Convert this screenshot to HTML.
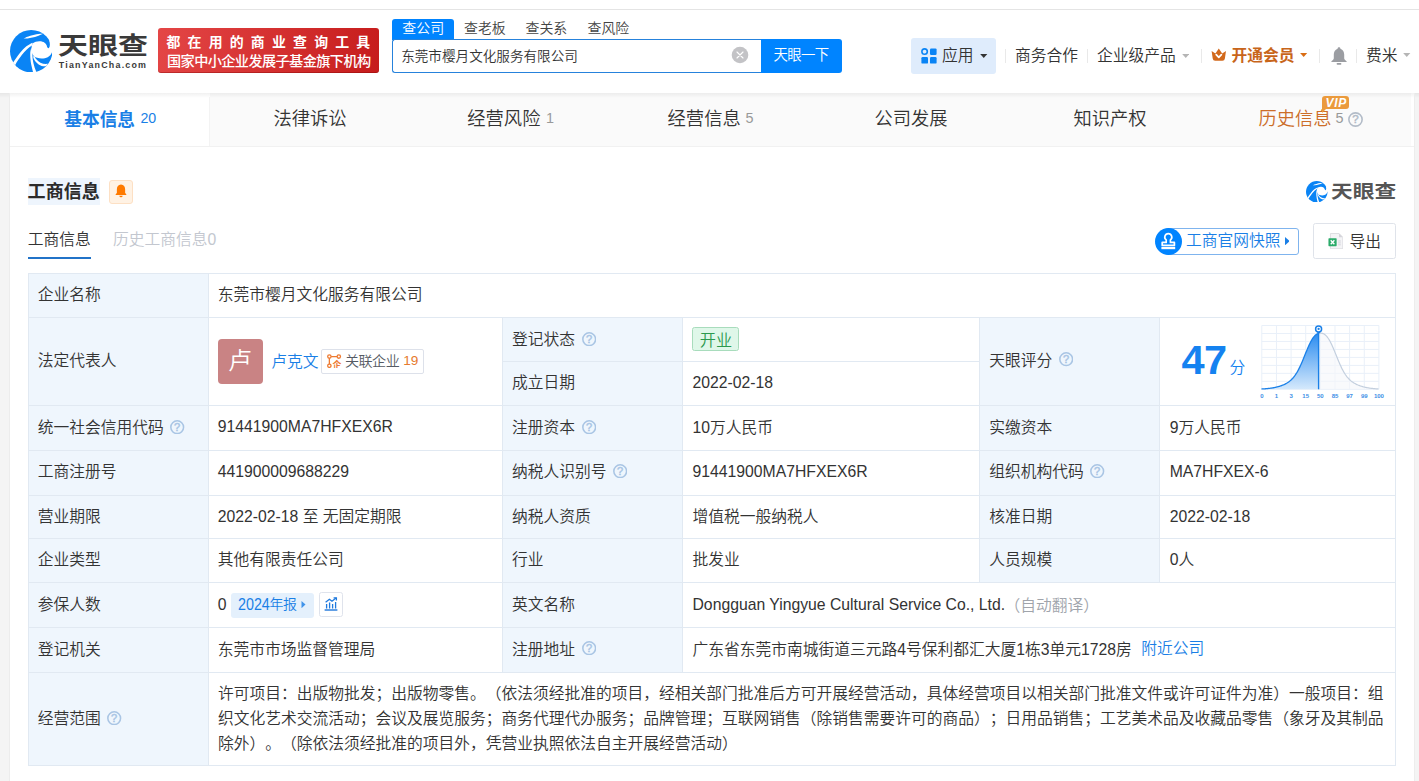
<!DOCTYPE html>
<html lang="zh-CN"><head><meta charset="utf-8"><title>东莞市樱月文化服务有限公司 - 天眼查</title>
<style>
*{box-sizing:border-box;margin:0;padding:0}
html,body{width:1419px;height:781px;overflow:hidden}
body{position:relative;background:#f4f4f4;font-family:"Liberation Sans","Noto Sans CJK SC",sans-serif;color:#333;font-size:16px;font-weight:350;text-spacing-trim:space-all}
.abs{position:absolute}
.t{position:absolute;white-space:nowrap;line-height:1}
#hdr{left:0;top:0;width:1419px;height:93px;background:#fff}
#hshadow{left:0;top:93px;width:1419px;height:5px;background:linear-gradient(rgba(0,0,0,.055),rgba(0,0,0,0))}
#topline{left:0;top:9px;width:1419px;height:1px;background:#e4e4e4}
#banner{left:158px;top:28px;width:221px;height:45px;border-radius:3px;background:linear-gradient(100deg,#e44646,#c61c1c);box-shadow:inset 0 -1px 0 rgba(120,0,0,.35)}
#stab{left:392px;top:19px;width:62px;height:21px;background:#0084ff;border-radius:3px 3px 0 0}
#sbox{left:392px;top:39px;width:370px;height:34px;border:1.2px solid #2682dc;border-right:none;border-radius:3px 0 0 3px;background:#fff}
#sbtn{left:761px;top:39px;width:81px;height:34px;background:#0084ff;border-radius:0 3px 3px 0}
#appbtn{left:911px;top:38px;width:85px;height:36px;background:#dfecfc;border-radius:3px}
.sep{position:absolute;top:49px;width:1px;height:14px;background:#e9e9e9}
#tabbar{left:10px;top:93px;width:1400.8px;height:53px;background:#fafafa}
#tab1{left:10px;top:93px;width:200px;height:53px;background:#fff}
#panel{left:10px;top:93px;width:1404px;height:700px;background:#fff}
.help{position:absolute;width:14px;height:14px}
</style></head>
<body>
<div class="abs" id="hdr"></div><div class="abs" id="topline"></div>
<svg class="abs" style="left:9.8px;top:29.6px;width:42.4px;height:42.4px" viewBox="0 0 100 100">
<circle cx="50" cy="50" r="50" fill="#0a84f5"/>
<g fill="#fff">
<path d="M32 20.2 C40 15.2 55 10.4 67.3 9.2 C71 8.8 75 8.7 78.4 8.8 C74 10.4 70.5 12 67.3 13.4 C56.3 17.4 41 20.6 32 20.2Z"/>
<path d="M53.6 30 C45 33 32.5 42 24.3 53.3 C17.3 62.4 11.5 71 7 77.4 L12.4 82.6 C15.8 75 21.8 67 28.3 58.3 C35.6 49 43.5 41.6 51.8 36.5Z"/>
<path d="M53.1 31.6 C58 28.3 64 26.6 70 26.8 C79 27 86 31.5 87.6 40 C89 42.6 90.6 43.2 91.9 42.7 C94.6 38.5 94.8 31.5 92.3 25 L104 22 L104 50.5 L99.7 50 C98.5 56 94 61.5 89 64 C82 67.8 72 68.3 64.2 65.6 C61 64.6 58.5 63.6 57 62.4 C53 57.5 50.9 52.5 50.7 47.6 C50.4 42 51 36.5 53.1 31.6Z"/>
<path d="M50.6 42 C46.8 50 47 62 49.8 80 C51.2 87 52.9 94 54.6 100.4 L62 98.6 C59.2 92 57 85.5 55.5 79 C53.6 71 52.6 62 53 55Z"/>
<path d="M54 62 C56 69.5 61 77.2 67.6 81.3 C73.2 84.9 79.3 86.2 85 85.4 L89.4 79.8 C83.2 80.6 77.2 79.8 71.8 77.1 C66 74.1 61 69 57.8 62.6Z"/>
</g></svg>
<div class="t " style="left:58px;top:32.0px;height:28.4px;line-height:28.4px;font-size:24.4px;color:#3a3a3a;font-weight:700;transform-origin:0 50%;transform:scaleX(1.23);">天眼查</div>
<div class="t " style="left:58.8px;top:58.8px;height:12.9px;line-height:12.9px;font-size:8.9px;color:#3a3a3a;font-weight:700;letter-spacing:1.22px;">TianYanCha.com</div>
<div class="abs" id="banner"></div>
<div class="t " style="left:166.5px;top:33.5px;height:17.9px;line-height:17.9px;font-size:13.9px;color:#fff;font-weight:700;letter-spacing:7.2px;">都在用的商业查询工具</div>
<div class="t " style="left:167px;top:52.1px;height:18.2px;line-height:18.2px;font-size:14.2px;color:#fff;font-weight:500;letter-spacing:-0.62px;">国家中小企业发展子基金旗下机构</div>
<div class="abs" id="stab"></div><div class="abs" id="sbox"></div><div class="abs" id="sbtn"></div>
<div class="t " style="left:402.3px;top:19.9px;height:17.95px;line-height:17.95px;font-size:13.95px;color:#fff;font-weight:350;">查公司</div>
<div class="t " style="left:464px;top:19.9px;height:17.95px;line-height:17.95px;font-size:13.95px;color:#444;font-weight:350;">查老板</div>
<div class="t " style="left:525.5px;top:19.9px;height:17.95px;line-height:17.95px;font-size:13.95px;color:#444;font-weight:350;">查关系</div>
<div class="t " style="left:587.5px;top:19.9px;height:17.95px;line-height:17.95px;font-size:13.95px;color:#444;font-weight:350;">查风险</div>
<div class="t " style="left:401.2px;top:47.9px;height:18px;line-height:18px;font-size:13.6px;color:#333;font-weight:350;">东莞市樱月文化服务有限公司</div>
<svg class="abs" style="left:731px;top:46px;width:18px;height:18px" viewBox="0 0 18 18"><circle cx="9" cy="9" r="8.3" fill="#c3c3c6"/><path d="M6 6L12 12M12 6L6 12" stroke="#fff" stroke-width="1.15" stroke-linecap="round"/></svg>
<div class="t " style="left:773.5px;top:46.4px;height:18.4px;line-height:18.4px;font-size:14.4px;color:#fff;font-weight:350;letter-spacing:-0.6px;">天眼一下</div>
<div class="abs" id="appbtn"></div>
<svg class="abs" style="left:921px;top:48px;width:16px;height:16px" viewBox="0 0 16 16"><circle cx="3.6" cy="3.6" r="2.7" fill="none" stroke="#0a84f5" stroke-width="1.6"/><rect x="9" y="0.4" width="6.6" height="6.6" rx="1.2" fill="#0a84f5"/><rect x="0.4" y="9" width="6.6" height="6.6" rx="1.2" fill="#0a84f5"/><rect x="9" y="9" width="6.6" height="6.6" rx="1.2" fill="#0a84f5"/></svg>
<div class="t " style="left:942px;top:46.0px;height:20px;line-height:20px;font-size:15.75px;color:#333;font-weight:350;">应用</div>
<svg class="abs" style="left:980px;top:53.5px;width:7.5px;height:4px" viewBox="0 0 8 4.5"><path d="M0 0H8L4 4.5Z" fill="#333"/></svg>
<div class="sep" style="left:1005px"></div>
<div class="sep" style="left:1087px"></div>
<div class="sep" style="left:1201px"></div>
<div class="sep" style="left:1319px"></div>
<div class="sep" style="left:1356px"></div>
<div class="t " style="left:1015px;top:46.0px;height:20px;line-height:20px;font-size:15.75px;color:#333;font-weight:350;">商务合作</div>
<div class="t " style="left:1097px;top:46.0px;height:20px;line-height:20px;font-size:15.75px;color:#333;font-weight:350;">企业级产品</div>
<svg class="abs" style="left:1181.5px;top:53.5px;width:7.5px;height:4px" viewBox="0 0 8 4.5"><path d="M0 0H8L4 4.5Z" fill="#b5b5b5"/></svg>
<svg class="abs" style="left:1211px;top:48.4px;width:15.6px;height:13px" viewBox="0 0 15.6 13"><path d="M0.6 3L4.4 5.6L7.8 0.4L11.2 5.6L15 3L13.9 10.6Q13.6 12.8 11.4 12.8H4.2Q2 12.8 1.7 10.6Z" fill="#d2691c"/><path d="M5.2 6.6L7.8 9.4L10.4 6.6" fill="none" stroke="#fff" stroke-width="1.7" stroke-linecap="round" stroke-linejoin="round"/></svg>
<div class="t " style="left:1231.5px;top:45.8px;height:20px;line-height:20px;font-size:15.75px;color:#c8651a;font-weight:700;">开通会员</div>
<svg class="abs" style="left:1300.3px;top:53.2px;width:7.3px;height:4px" viewBox="0 0 8 4.5"><path d="M0 0H8L4 4.5Z" fill="#d96d14"/></svg>
<svg class="abs" style="left:1330.5px;top:46.8px;width:16px;height:18px" viewBox="0 0 16 18"><path d="M8 0.3C8.9 0.3 9.4 0.9 9.4 1.7C12 2.5 13.2 4.9 13.2 7.6V11.2C13.2 12.4 14.2 13.2 15.6 14.2V15H0.4V14.2C1.8 13.2 2.8 12.4 2.8 11.2V7.6C2.8 4.9 4 2.5 6.6 1.7C6.6 0.9 7.1 0.3 8 0.3Z" fill="#9b9da2"/><rect x="5.6" y="16" width="4.8" height="1.7" rx="0.85" fill="#9b9da2"/></svg>
<div class="t " style="left:1366px;top:45.8px;height:20px;line-height:20px;font-size:15.75px;color:#333;font-weight:350;">费米</div>
<svg class="abs" style="left:1403px;top:53.2px;width:7.5px;height:4px" viewBox="0 0 8 4.5"><path d="M0 0H8L4 4.5Z" fill="#b5b5b5"/></svg>
<div class="abs" id="panel"></div><div class="abs" id="tabbar"></div><div class="abs" id="tab1"></div><div class="abs" id="hshadow"></div><div class="abs" style="left:10px;top:146px;width:1404px;height:1px;background:#f1f1f1"></div><div class="abs" style="left:209px;top:97px;width:1px;height:49px;background:#f3f3f3"></div><div class="abs" style="left:9px;top:93px;width:1px;height:700px;background:#ececec"></div><div class="abs" style="left:1414px;top:93px;width:1px;height:700px;background:#ededed"></div>
<div class="t " style="left:64.3px;top:108.8px;height:22px;line-height:22px;font-size:17.7px;color:#1a7fe6;font-weight:700;">基本信息</div>
<div class="t " style="left:140.4px;top:108.9px;height:18.2px;line-height:18.2px;font-size:14.2px;color:#1a7fe6;font-weight:350;">20</div>
<div class="t " style="left:273.5px;top:108.4px;height:22.3px;line-height:22.3px;font-size:18.3px;color:#333;font-weight:350;">法律诉讼</div>
<div class="t " style="left:467.3px;top:108.4px;height:22.3px;line-height:22.3px;font-size:18.3px;color:#333;font-weight:350;">经营风险</div>
<div class="t " style="left:546px;top:109.0px;height:18.4px;line-height:18.4px;font-size:14.4px;color:#999;font-weight:350;">1</div>
<div class="t " style="left:667.6px;top:108.4px;height:22.3px;line-height:22.3px;font-size:18.3px;color:#333;font-weight:350;">经营信息</div>
<div class="t " style="left:745.6px;top:109.0px;height:18.4px;line-height:18.4px;font-size:14.4px;color:#999;font-weight:350;">5</div>
<div class="t " style="left:874.5px;top:108.4px;height:22.3px;line-height:22.3px;font-size:18.3px;color:#333;font-weight:350;">公司发展</div>
<div class="t " style="left:1073.5px;top:108.4px;height:22.3px;line-height:22.3px;font-size:18.3px;color:#333;font-weight:350;">知识产权</div>
<div class="t " style="left:1258.5px;top:108.4px;height:22.3px;line-height:22.3px;font-size:18.3px;color:#cc6d28;font-weight:350;">历史信息</div>
<div class="t " style="left:1335.6px;top:109.0px;height:18.4px;line-height:18.4px;font-size:14.4px;color:#999;font-weight:350;">5</div>
<svg class="help" style="left:1348px;top:111.5px;width:15px;height:15px" viewBox="0 0 14 14"><circle cx="7" cy="7" r="6.2" fill="none" stroke="#b3bcc8" stroke-width="1.5"/><text x="7" y="10.7" text-anchor="middle" font-family="Liberation Sans, sans-serif" font-size="10.8" fill="#b3bcc8" stroke="#b3bcc8" stroke-width="0.45">?</text></svg>
<svg class="abs" style="left:1322px;top:96px;width:27px;height:17px" viewBox="0 0 27 17"><path d="M3 0H24Q27 0 27 3V10Q27 13 24 13H4L0 17V3Q0 0 3 0Z" fill="#eb9a3c"/><text x="14.2" y="10.8" text-anchor="middle" font-family="Liberation Sans, sans-serif" font-size="12" font-weight="700" font-style="italic" letter-spacing="0.6" fill="#fff">VIP</text></svg>
<div class="abs" style="left:28px;top:178px;width:72px;height:27px;background:#eef5fd"></div>
<div class="t " style="left:27.6px;top:180.9px;height:22.05px;line-height:22.05px;font-size:18.05px;color:#2b2b2b;font-weight:700;">工商信息</div>
<div class="abs" style="left:109px;top:180px;width:24px;height:24px;background:#fff2e4;border:1px solid #fde0c4;border-radius:3px"></div>
<svg class="abs" style="left:113.7px;top:183.8px;width:14px;height:15px" viewBox="0 0 14 16"><path d="M7 0.5C4 0.5 2.6 2.8 2.6 5.6V9.2L1 11.8H13L11.4 9.2V5.6C11.4 2.8 10 0.5 7 0.5Z" fill="#ff7a00"/><path d="M5.2 12.6H8.8Q8.6 14.2 7 14.2Q5.4 14.2 5.2 12.6Z" fill="#ff7a00"/></svg>
<div class="t " style="left:27.8px;top:229.6px;height:20.0px;line-height:20.0px;font-size:15.75px;color:#333;font-weight:350;">工商信息</div>
<div class="abs" style="left:27.8px;top:256.8px;width:63.2px;height:2.5px;background:#2173c8"></div>
<div class="t " style="left:113px;top:229.5px;height:20px;line-height:20px;font-size:15.75px;color:#c3c7cf;font-weight:350;">历史工商信息0</div>
<svg class="abs" style="left:1306px;top:180.5px;width:21.5px;height:21.5px" viewBox="0 0 100 100">
<circle cx="50" cy="50" r="50" fill="#0a84f5"/>
<g fill="#fff">
<path d="M32 20.2 C40 15.2 55 10.4 67.3 9.2 C71 8.8 75 8.7 78.4 8.8 C74 10.4 70.5 12 67.3 13.4 C56.3 17.4 41 20.6 32 20.2Z"/>
<path d="M53.6 30 C45 33 32.5 42 24.3 53.3 C17.3 62.4 11.5 71 7 77.4 L12.4 82.6 C15.8 75 21.8 67 28.3 58.3 C35.6 49 43.5 41.6 51.8 36.5Z"/>
<path d="M53.1 31.6 C58 28.3 64 26.6 70 26.8 C79 27 86 31.5 87.6 40 C89 42.6 90.6 43.2 91.9 42.7 C94.6 38.5 94.8 31.5 92.3 25 L104 22 L104 50.5 L99.7 50 C98.5 56 94 61.5 89 64 C82 67.8 72 68.3 64.2 65.6 C61 64.6 58.5 63.6 57 62.4 C53 57.5 50.9 52.5 50.7 47.6 C50.4 42 51 36.5 53.1 31.6Z"/>
<path d="M50.6 42 C46.8 50 47 62 49.8 80 C51.2 87 52.9 94 54.6 100.4 L62 98.6 C59.2 92 57 85.5 55.5 79 C53.6 71 52.6 62 53 55Z"/>
<path d="M54 62 C56 69.5 61 77.2 67.6 81.3 C73.2 84.9 79.3 86.2 85 85.4 L89.4 79.8 C83.2 80.6 77.2 79.8 71.8 77.1 C66 74.1 61 69 57.8 62.6Z"/>
</g></svg>
<div class="t " style="left:1331.3px;top:181.1px;height:22.4px;line-height:22.4px;font-size:18.4px;color:#555;font-weight:700;transform-origin:0 50%;transform:scaleX(1.18);">天眼查</div>
<div class="abs" style="left:1165px;top:228px;width:134px;height:27px;border:1px solid #7fb4ee;border-radius:3px;background:#fff"></div>
<svg class="abs" style="left:1154.5px;top:228px;width:27px;height:27px" viewBox="0 0 27 27"><circle cx="13.5" cy="13.5" r="13.5" fill="#0084ff"/><path d="M13.3 5.7a3.5 3.5 0 0 1 2.1 6.3v2.4h4v3H7.2v-3h4v-2.4a3.5 3.5 0 0 1 2.1-6.3Z" fill="none" stroke="#fff" stroke-width="1.7" stroke-linejoin="round"/><rect x="6.4" y="18.9" width="13.8" height="2.3" fill="#fff"/></svg>
<div class="t " style="left:1186px;top:231.0px;height:20px;line-height:20px;font-size:15.75px;color:#1a7fe6;font-weight:350;">工商官网快照</div>
<svg class="abs" style="left:1284.8px;top:236.7px;width:4.6px;height:8.3px" viewBox="0 0 5 9"><path d="M0 0L5 4.5L0 9Z" fill="#1a7fe6"/></svg>
<div class="abs" style="left:1313px;top:223px;width:83px;height:36px;border:1px solid #dfe3ea;border-radius:2.5px;background:#fff"></div>
<svg class="abs" style="left:1327.6px;top:232.8px;width:15.4px;height:16.2px" viewBox="0 0 16 17"><path d="M2.5 0.5H11.5L15.5 4.5V16.5H2.5Z" fill="#f4f4f6" stroke="#d9d9de" stroke-width="0.9"/><path d="M11.5 0.5V4.5H15.5Z" fill="#d4d4da"/><rect x="0.4" y="5.6" width="8.6" height="8.2" rx="0.6" fill="#2bab6a"/><path d="M2.8 7.6L6.6 11.8M6.6 7.6L2.8 11.8" stroke="#fff" stroke-width="1.4"/><path d="M10.6 8.4H13.4M10.6 10.4H13.4M10.6 12.4H13.4" stroke="#d4d4da" stroke-width="1"/></svg>
<div class="t " style="left:1349.5px;top:231.5px;height:20px;line-height:20px;font-size:15.75px;color:#333;font-weight:350;">导出</div>
<div class="abs" style="left:28px;top:273px;width:180px;height:492px;background:#eff6fd"></div>
<div class="abs" style="left:502px;top:317px;width:180px;height:355px;background:#eff6fd"></div>
<div class="abs" style="left:979px;top:317px;width:180px;height:265px;background:#eff6fd"></div>
<div class="abs" style="left:28px;top:273px;width:1368px;height:1px;background:#e1e9f2"></div>
<div class="abs" style="left:28px;top:317px;width:1368px;height:1px;background:#e1e9f2"></div>
<div class="abs" style="left:502px;top:361px;width:478px;height:1px;background:#e1e9f2"></div>
<div class="abs" style="left:28px;top:405px;width:1368px;height:1px;background:#e1e9f2"></div>
<div class="abs" style="left:28px;top:450px;width:1368px;height:1px;background:#e1e9f2"></div>
<div class="abs" style="left:28px;top:495px;width:1368px;height:1px;background:#e1e9f2"></div>
<div class="abs" style="left:28px;top:538px;width:1368px;height:1px;background:#e1e9f2"></div>
<div class="abs" style="left:28px;top:582px;width:1368px;height:1px;background:#e1e9f2"></div>
<div class="abs" style="left:28px;top:627px;width:1368px;height:1px;background:#e1e9f2"></div>
<div class="abs" style="left:28px;top:672px;width:1368px;height:1px;background:#e1e9f2"></div>
<div class="abs" style="left:28px;top:765px;width:1368px;height:1px;background:#e1e9f2"></div>
<div class="abs" style="left:28px;top:273px;width:1px;height:493px;background:#e1e9f2"></div>
<div class="abs" style="left:1395px;top:273px;width:1px;height:493px;background:#e1e9f2"></div>
<div class="abs" style="left:208px;top:273px;width:1px;height:493px;background:#e1e9f2"></div>
<div class="abs" style="left:502px;top:317px;width:1px;height:356px;background:#e1e9f2"></div>
<div class="abs" style="left:682px;top:317px;width:1px;height:356px;background:#e1e9f2"></div>
<div class="abs" style="left:979px;top:317px;width:1px;height:266px;background:#e1e9f2"></div>
<div class="abs" style="left:1159px;top:317px;width:1px;height:266px;background:#e1e9f2"></div>
<div class="t " style="left:37.7px;top:284.5px;height:20px;line-height:20px;font-size:15.75px;color:#333;font-weight:350;">企业名称</div>
<div class="t " style="left:217.7px;top:284.5px;height:20px;line-height:20px;font-size:15.75px;color:#333;font-weight:350;">东莞市樱月文化服务有限公司</div>
<div class="t " style="left:37.7px;top:350.9px;height:20px;line-height:20px;font-size:15.75px;color:#333;font-weight:350;">法定代表人</div>
<div class="abs" style="left:218px;top:339px;width:45px;height:45px;border-radius:4px;background:#c98384"></div>
<div class="t " style="left:228px;top:347.0px;height:28px;line-height:28px;font-size:24px;color:#fff;font-weight:350;">卢</div>
<div class="t " style="left:271.3px;top:351.6px;height:20px;line-height:20px;font-size:15.75px;color:#1a7fe6;font-weight:350;">卢克文</div>
<div class="abs" style="left:321px;top:349px;width:103px;height:25px;border:1px solid #dde1ea;border-radius:2px;background:#fff"></div>
<svg class="abs" style="left:327.3px;top:354px;width:14.4px;height:14.4px" viewBox="0 0 14 14"><g fill="none" stroke="#ee7a30" stroke-width="1.25"><circle cx="2.3" cy="2.5" r="1.65"/><circle cx="11.5" cy="2.5" r="1.65"/><circle cx="2.3" cy="11.4" r="1.65"/><path d="M4 2.5H9.8M2.3 4.2V9.7"/></g><text x="9.7" y="13.4" text-anchor="middle" font-family="Noto Sans CJK SC, sans-serif" font-size="8.6" font-weight="700" fill="#ee7a30">企</text></svg>
<div class="t " style="left:345px;top:351.6px;height:18.1px;line-height:18.1px;font-size:14.1px;color:#555a63;font-weight:350;letter-spacing:-0.55px;">关联企业</div>
<div class="t " style="left:403.2px;top:352.3px;height:18px;line-height:18px;font-size:13.6px;color:#e67a2e;font-weight:350;">19</div>
<div class="t " style="left:512.0px;top:330.1px;height:20px;line-height:20px;font-size:15.75px;color:#333;font-weight:350;">登记状态</div><svg class="help" style="left:581.6px;top:331.6px;width:14.4px;height:14.4px" viewBox="0 0 14 14"><circle cx="7" cy="7" r="6.2" fill="none" stroke="#a9c5e4" stroke-width="1.5"/><text x="7" y="10.7" text-anchor="middle" font-family="Liberation Sans, sans-serif" font-size="10.8" fill="#a9c5e4" stroke="#a9c5e4" stroke-width="0.45">?</text></svg>
<div class="abs" style="left:692px;top:327px;width:47px;height:24px;border:1px solid #a8dcbc;border-radius:2.5px;background:#dff7e9"></div>
<div class="t " style="left:699.8px;top:329.9px;height:20.15px;line-height:20.15px;font-size:16.15px;color:#2c994e;font-weight:350;">开业</div>
<div class="t " style="left:512.0px;top:372.7px;height:20px;line-height:20px;font-size:15.75px;color:#333;font-weight:350;">成立日期</div>
<div class="t " style="left:692.5px;top:372.7px;height:20px;line-height:20px;font-size:15.75px;color:#333;font-weight:350;">2022-02-18</div>
<div class="t " style="left:989.2px;top:350.9px;height:20px;line-height:20px;font-size:15.75px;color:#333;font-weight:350;">天眼评分</div><svg class="help" style="left:1058.8px;top:352.4px;width:14.4px;height:14.4px" viewBox="0 0 14 14"><circle cx="7" cy="7" r="6.2" fill="none" stroke="#a9c5e4" stroke-width="1.5"/><text x="7" y="10.7" text-anchor="middle" font-family="Liberation Sans, sans-serif" font-size="10.8" fill="#a9c5e4" stroke="#a9c5e4" stroke-width="0.45">?</text></svg>
<div class="t " style="left:1181.6px;top:337.2px;height:45.5px;line-height:45.5px;font-size:41.5px;color:#1582f0;font-weight:700;letter-spacing:-0.6px;">47</div>
<div class="t " style="left:1229.5px;top:357.5px;height:20px;line-height:20px;font-size:15.75px;color:#1582f0;font-weight:350;">分</div>
<svg class="abs" style="left:1250px;top:318px;width:140px;height:86px" viewBox="1250 318 140 86"><defs><linearGradient id="cg" x1="0" y1="0" x2="0" y2="1"><stop offset="0" stop-color="#2b8cf0"/><stop offset="1" stop-color="#d5e9fc"/></linearGradient></defs><path d="M1261.80 325.5V389.3" stroke="#e9f0f9" stroke-width="1"/><path d="M1261.8 325.50H1378.9" stroke="#e9f0f9" stroke-width="1"/><path d="M1276.44 325.5V389.3" stroke="#e9f0f9" stroke-width="1"/><path d="M1261.8 333.48H1378.9" stroke="#e9f0f9" stroke-width="1"/><path d="M1291.08 325.5V389.3" stroke="#e9f0f9" stroke-width="1"/><path d="M1261.8 341.45H1378.9" stroke="#e9f0f9" stroke-width="1"/><path d="M1305.71 325.5V389.3" stroke="#e9f0f9" stroke-width="1"/><path d="M1261.8 349.43H1378.9" stroke="#e9f0f9" stroke-width="1"/><path d="M1320.35 325.5V389.3" stroke="#e9f0f9" stroke-width="1"/><path d="M1261.8 357.40H1378.9" stroke="#e9f0f9" stroke-width="1"/><path d="M1334.99 325.5V389.3" stroke="#e9f0f9" stroke-width="1"/><path d="M1261.8 365.38H1378.9" stroke="#e9f0f9" stroke-width="1"/><path d="M1349.62 325.5V389.3" stroke="#e9f0f9" stroke-width="1"/><path d="M1261.8 373.35H1378.9" stroke="#e9f0f9" stroke-width="1"/><path d="M1364.26 325.5V389.3" stroke="#e9f0f9" stroke-width="1"/><path d="M1261.8 381.32H1378.9" stroke="#e9f0f9" stroke-width="1"/><path d="M1378.90 325.5V389.3" stroke="#e9f0f9" stroke-width="1"/><path d="M1261.8 389.30H1378.9" stroke="#e9f0f9" stroke-width="1"/><path d="M1261.5 388.98 L1262.0 388.96 L1262.5 388.93 L1263.0 388.91 L1263.5 388.88 L1264.0 388.85 L1264.5 388.81 L1265.0 388.78 L1265.5 388.74 L1266.0 388.70 L1266.5 388.66 L1267.0 388.62 L1267.5 388.57 L1268.0 388.52 L1268.5 388.47 L1269.0 388.41 L1269.5 388.35 L1270.0 388.29 L1270.5 388.22 L1271.0 388.15 L1271.5 388.08 L1272.0 388.00 L1272.5 387.92 L1273.0 387.84 L1273.5 387.75 L1274.0 387.66 L1274.5 387.56 L1275.0 387.46 L1275.5 387.35 L1276.0 387.24 L1276.5 387.12 L1277.0 386.99 L1277.5 386.87 L1278.0 386.73 L1278.5 386.59 L1279.0 386.44 L1279.5 386.29 L1280.0 386.13 L1280.5 385.96 L1281.0 385.79 L1281.5 385.61 L1282.0 385.42 L1282.5 385.22 L1283.0 385.02 L1283.5 384.80 L1284.0 384.58 L1284.5 384.34 L1285.0 384.10 L1285.5 383.84 L1286.0 383.57 L1286.5 383.29 L1287.0 382.99 L1287.5 382.68 L1288.0 382.36 L1288.5 382.02 L1289.0 381.65 L1289.5 381.27 L1290.0 380.87 L1290.5 380.45 L1291.0 380.01 L1291.5 379.54 L1292.0 379.04 L1292.5 378.52 L1293.0 377.96 L1293.5 377.38 L1294.0 376.77 L1294.5 376.12 L1295.0 375.44 L1295.5 374.72 L1296.0 373.96 L1296.5 373.17 L1297.0 372.35 L1297.5 371.48 L1298.0 370.58 L1298.5 369.64 L1299.0 368.67 L1299.5 367.66 L1300.0 366.62 L1300.5 365.54 L1301.0 364.43 L1301.5 363.30 L1302.0 362.14 L1302.5 360.96 L1303.0 359.76 L1303.5 358.54 L1304.0 357.31 L1304.5 356.08 L1305.0 354.84 L1305.5 353.60 L1306.0 352.36 L1306.5 351.14 L1307.0 349.93 L1307.5 348.74 L1308.0 347.57 L1308.5 346.43 L1309.0 345.32 L1309.5 344.24 L1310.0 343.21 L1310.5 342.21 L1311.0 341.26 L1311.5 340.36 L1312.0 339.51 L1312.5 338.71 L1313.0 337.97 L1313.5 337.28 L1314.0 336.65 L1314.5 336.07 L1315.0 335.56 L1315.5 335.09 L1316.0 334.69 L1316.5 334.33 L1317.0 334.04 L1317.5 333.79 L1318.0 333.59 L1318.5 333.43 L1318.6 389.3 L1261.8 389.3Z" fill="url(#cg)"/><path d="M1319.0 333.32 L1319.5 333.25 L1320.0 333.21 L1320.5 333.20 L1321.0 333.21 L1321.5 333.25 L1322.0 333.32 L1322.5 333.43 L1323.0 333.59 L1323.5 333.79 L1324.0 334.04 L1324.5 334.33 L1325.0 334.69 L1325.5 335.09 L1326.0 335.56 L1326.5 336.07 L1327.0 336.65 L1327.5 337.28 L1328.0 337.97 L1328.5 338.71 L1329.0 339.51 L1329.5 340.36 L1330.0 341.26 L1330.5 342.21 L1331.0 343.21 L1331.5 344.24 L1332.0 345.32 L1332.5 346.43 L1333.0 347.57 L1333.5 348.74 L1334.0 349.93 L1334.5 351.14 L1335.0 352.36 L1335.5 353.60 L1336.0 354.84 L1336.5 356.08 L1337.0 357.31 L1337.5 358.54 L1338.0 359.76 L1338.5 360.96 L1339.0 362.14 L1339.5 363.30 L1340.0 364.43 L1340.5 365.54 L1341.0 366.62 L1341.5 367.66 L1342.0 368.67 L1342.5 369.64 L1343.0 370.58 L1343.5 371.48 L1344.0 372.35 L1344.5 373.17 L1345.0 373.96 L1345.5 374.72 L1346.0 375.44 L1346.5 376.12 L1347.0 376.77 L1347.5 377.38 L1348.0 377.96 L1348.5 378.52 L1349.0 379.04 L1349.5 379.54 L1350.0 380.01 L1350.5 380.45 L1351.0 380.87 L1351.5 381.27 L1352.0 381.65 L1352.5 382.02 L1353.0 382.36 L1353.5 382.68 L1354.0 382.99 L1354.5 383.29 L1355.0 383.57 L1355.5 383.84 L1356.0 384.10 L1356.5 384.34 L1357.0 384.58 L1357.5 384.80 L1358.0 385.02 L1358.5 385.22 L1359.0 385.42 L1359.5 385.61 L1360.0 385.79 L1360.5 385.96 L1361.0 386.13 L1361.5 386.29 L1362.0 386.44 L1362.5 386.59 L1363.0 386.73 L1363.5 386.87 L1364.0 386.99 L1364.5 387.12 L1365.0 387.24 L1365.5 387.35 L1366.0 387.46 L1366.5 387.56 L1367.0 387.66 L1367.5 387.75 L1368.0 387.84 L1368.5 387.92 L1369.0 388.00 L1369.5 388.08 L1370.0 388.15 L1370.5 388.22 L1371.0 388.29 L1371.5 388.35 L1372.0 388.41 L1372.5 388.47 L1373.0 388.52 L1373.5 388.57 L1374.0 388.62 L1374.5 388.66 L1375.0 388.70 L1375.5 388.74 L1376.0 388.78 L1376.5 388.81 L1377.0 388.85 L1377.5 388.88 L1378.0 388.91 L1378.5 388.93 L1378.9 389.3 L1318.6 389.3Z" fill="#f5f7fa" opacity="0.6"/><path d="M1319.0 333.32 L1319.5 333.25 L1320.0 333.21 L1320.5 333.20 L1321.0 333.21 L1321.5 333.25 L1322.0 333.32 L1322.5 333.43 L1323.0 333.59 L1323.5 333.79 L1324.0 334.04 L1324.5 334.33 L1325.0 334.69 L1325.5 335.09 L1326.0 335.56 L1326.5 336.07 L1327.0 336.65 L1327.5 337.28 L1328.0 337.97 L1328.5 338.71 L1329.0 339.51 L1329.5 340.36 L1330.0 341.26 L1330.5 342.21 L1331.0 343.21 L1331.5 344.24 L1332.0 345.32 L1332.5 346.43 L1333.0 347.57 L1333.5 348.74 L1334.0 349.93 L1334.5 351.14 L1335.0 352.36 L1335.5 353.60 L1336.0 354.84 L1336.5 356.08 L1337.0 357.31 L1337.5 358.54 L1338.0 359.76 L1338.5 360.96 L1339.0 362.14 L1339.5 363.30 L1340.0 364.43 L1340.5 365.54 L1341.0 366.62 L1341.5 367.66 L1342.0 368.67 L1342.5 369.64 L1343.0 370.58 L1343.5 371.48 L1344.0 372.35 L1344.5 373.17 L1345.0 373.96 L1345.5 374.72 L1346.0 375.44 L1346.5 376.12 L1347.0 376.77 L1347.5 377.38 L1348.0 377.96 L1348.5 378.52 L1349.0 379.04 L1349.5 379.54 L1350.0 380.01 L1350.5 380.45 L1351.0 380.87 L1351.5 381.27 L1352.0 381.65 L1352.5 382.02 L1353.0 382.36 L1353.5 382.68 L1354.0 382.99 L1354.5 383.29 L1355.0 383.57 L1355.5 383.84 L1356.0 384.10 L1356.5 384.34 L1357.0 384.58 L1357.5 384.80 L1358.0 385.02 L1358.5 385.22 L1359.0 385.42 L1359.5 385.61 L1360.0 385.79 L1360.5 385.96 L1361.0 386.13 L1361.5 386.29 L1362.0 386.44 L1362.5 386.59 L1363.0 386.73 L1363.5 386.87 L1364.0 386.99 L1364.5 387.12 L1365.0 387.24 L1365.5 387.35 L1366.0 387.46 L1366.5 387.56 L1367.0 387.66 L1367.5 387.75 L1368.0 387.84 L1368.5 387.92 L1369.0 388.00 L1369.5 388.08 L1370.0 388.15 L1370.5 388.22 L1371.0 388.29 L1371.5 388.35 L1372.0 388.41 L1372.5 388.47 L1373.0 388.52 L1373.5 388.57 L1374.0 388.62 L1374.5 388.66 L1375.0 388.70 L1375.5 388.74 L1376.0 388.78 L1376.5 388.81 L1377.0 388.85 L1377.5 388.88 L1378.0 388.91 L1378.5 388.93" fill="none" stroke="#c3cfde" stroke-width="1.2"/><path d="M1261.5 388.98 L1262.0 388.96 L1262.5 388.93 L1263.0 388.91 L1263.5 388.88 L1264.0 388.85 L1264.5 388.81 L1265.0 388.78 L1265.5 388.74 L1266.0 388.70 L1266.5 388.66 L1267.0 388.62 L1267.5 388.57 L1268.0 388.52 L1268.5 388.47 L1269.0 388.41 L1269.5 388.35 L1270.0 388.29 L1270.5 388.22 L1271.0 388.15 L1271.5 388.08 L1272.0 388.00 L1272.5 387.92 L1273.0 387.84 L1273.5 387.75 L1274.0 387.66 L1274.5 387.56 L1275.0 387.46 L1275.5 387.35 L1276.0 387.24 L1276.5 387.12 L1277.0 386.99 L1277.5 386.87 L1278.0 386.73 L1278.5 386.59 L1279.0 386.44 L1279.5 386.29 L1280.0 386.13 L1280.5 385.96 L1281.0 385.79 L1281.5 385.61 L1282.0 385.42 L1282.5 385.22 L1283.0 385.02 L1283.5 384.80 L1284.0 384.58 L1284.5 384.34 L1285.0 384.10 L1285.5 383.84 L1286.0 383.57 L1286.5 383.29 L1287.0 382.99 L1287.5 382.68 L1288.0 382.36 L1288.5 382.02 L1289.0 381.65 L1289.5 381.27 L1290.0 380.87 L1290.5 380.45 L1291.0 380.01 L1291.5 379.54 L1292.0 379.04 L1292.5 378.52 L1293.0 377.96 L1293.5 377.38 L1294.0 376.77 L1294.5 376.12 L1295.0 375.44 L1295.5 374.72 L1296.0 373.96 L1296.5 373.17 L1297.0 372.35 L1297.5 371.48 L1298.0 370.58 L1298.5 369.64 L1299.0 368.67 L1299.5 367.66 L1300.0 366.62 L1300.5 365.54 L1301.0 364.43 L1301.5 363.30 L1302.0 362.14 L1302.5 360.96 L1303.0 359.76 L1303.5 358.54 L1304.0 357.31 L1304.5 356.08 L1305.0 354.84 L1305.5 353.60 L1306.0 352.36 L1306.5 351.14 L1307.0 349.93 L1307.5 348.74 L1308.0 347.57 L1308.5 346.43 L1309.0 345.32 L1309.5 344.24 L1310.0 343.21 L1310.5 342.21 L1311.0 341.26 L1311.5 340.36 L1312.0 339.51 L1312.5 338.71 L1313.0 337.97 L1313.5 337.28 L1314.0 336.65 L1314.5 336.07 L1315.0 335.56 L1315.5 335.09 L1316.0 334.69 L1316.5 334.33 L1317.0 334.04 L1317.5 333.79 L1318.0 333.59 L1318.5 333.43" fill="none" stroke="#1a80e8" stroke-width="1.3"/><path d="M1318.6 332V389.3" stroke="#1a80e8" stroke-width="1.4"/><path d="M1316.0 331 L1318.6 334 L1321.1999999999998 331Z" fill="#1a80e8"/><circle cx="1318.6" cy="328.9" r="3" fill="#fff" stroke="#1a80e8" stroke-width="1.5"/><circle cx="1318.6" cy="328.9" r="1.15" fill="#1a80e8"/><text x="1261.8" y="397.5" text-anchor="middle" font-family="Liberation Sans, sans-serif" font-size="6" font-weight="700" fill="#3d8fe6">0</text><text x="1276.4" y="397.5" text-anchor="middle" font-family="Liberation Sans, sans-serif" font-size="6" font-weight="700" fill="#3d8fe6">1</text><text x="1291.1" y="397.5" text-anchor="middle" font-family="Liberation Sans, sans-serif" font-size="6" font-weight="700" fill="#3d8fe6">3</text><text x="1305.7" y="397.5" text-anchor="middle" font-family="Liberation Sans, sans-serif" font-size="6" font-weight="700" fill="#3d8fe6">15</text><text x="1320.3" y="397.5" text-anchor="middle" font-family="Liberation Sans, sans-serif" font-size="6" font-weight="700" fill="#3d8fe6">50</text><text x="1335.0" y="397.5" text-anchor="middle" font-family="Liberation Sans, sans-serif" font-size="6" font-weight="700" fill="#3d8fe6">85</text><text x="1349.6" y="397.5" text-anchor="middle" font-family="Liberation Sans, sans-serif" font-size="6" font-weight="700" fill="#3d8fe6">97</text><text x="1364.3" y="397.5" text-anchor="middle" font-family="Liberation Sans, sans-serif" font-size="6" font-weight="700" fill="#3d8fe6">99</text><text x="1378.9" y="397.5" text-anchor="middle" font-family="Liberation Sans, sans-serif" font-size="6" font-weight="700" fill="#3d8fe6">100</text></svg>
<div class="t " style="left:37.7px;top:418.3px;height:20px;line-height:20px;font-size:15.75px;color:#333;font-weight:350;">统一社会信用代码</div><svg class="help" style="left:170.29999999999998px;top:419.8px;width:14.4px;height:14.4px" viewBox="0 0 14 14"><circle cx="7" cy="7" r="6.2" fill="none" stroke="#a9c5e4" stroke-width="1.5"/><text x="7" y="10.7" text-anchor="middle" font-family="Liberation Sans, sans-serif" font-size="10.8" fill="#a9c5e4" stroke="#a9c5e4" stroke-width="0.45">?</text></svg>
<div class="t " style="left:217.7px;top:417.2px;height:20px;line-height:20px;font-size:15.75px;color:#333;font-weight:350;">91441900MA7HFXEX6R</div>
<div class="t " style="left:512.0px;top:418.3px;height:20px;line-height:20px;font-size:15.75px;color:#333;font-weight:350;">注册资本</div><svg class="help" style="left:581.6px;top:419.8px;width:14.4px;height:14.4px" viewBox="0 0 14 14"><circle cx="7" cy="7" r="6.2" fill="none" stroke="#a9c5e4" stroke-width="1.5"/><text x="7" y="10.7" text-anchor="middle" font-family="Liberation Sans, sans-serif" font-size="10.8" fill="#a9c5e4" stroke="#a9c5e4" stroke-width="0.45">?</text></svg>
<div class="t " style="left:692.5px;top:418.3px;height:20px;line-height:20px;font-size:15.75px;color:#333;font-weight:350;">10万人民币</div>
<div class="t " style="left:989.2px;top:418.3px;height:20px;line-height:20px;font-size:15.75px;color:#333;font-weight:350;">实缴资本</div>
<div class="t " style="left:1169.7px;top:418.3px;height:20px;line-height:20px;font-size:15.75px;color:#333;font-weight:350;">9万人民币</div>
<div class="t " style="left:37.7px;top:462.1px;height:20px;line-height:20px;font-size:15.75px;color:#333;font-weight:350;">工商注册号</div>
<div class="t " style="left:217.7px;top:462.1px;height:20px;line-height:20px;font-size:15.75px;color:#333;font-weight:350;">441900009688229</div>
<div class="t " style="left:512.0px;top:462.1px;height:20px;line-height:20px;font-size:15.75px;color:#333;font-weight:350;">纳税人识别号</div><svg class="help" style="left:613.1px;top:463.6px;width:14.4px;height:14.4px" viewBox="0 0 14 14"><circle cx="7" cy="7" r="6.2" fill="none" stroke="#a9c5e4" stroke-width="1.5"/><text x="7" y="10.7" text-anchor="middle" font-family="Liberation Sans, sans-serif" font-size="10.8" fill="#a9c5e4" stroke="#a9c5e4" stroke-width="0.45">?</text></svg>
<div class="t " style="left:692.5px;top:462.1px;height:20px;line-height:20px;font-size:15.75px;color:#333;font-weight:350;">91441900MA7HFXEX6R</div>
<div class="t " style="left:989.2px;top:462.1px;height:20px;line-height:20px;font-size:15.75px;color:#333;font-weight:350;">组织机构代码</div><svg class="help" style="left:1090.3px;top:463.6px;width:14.4px;height:14.4px" viewBox="0 0 14 14"><circle cx="7" cy="7" r="6.2" fill="none" stroke="#a9c5e4" stroke-width="1.5"/><text x="7" y="10.7" text-anchor="middle" font-family="Liberation Sans, sans-serif" font-size="10.8" fill="#a9c5e4" stroke="#a9c5e4" stroke-width="0.45">?</text></svg>
<div class="t " style="left:1169.7px;top:462.1px;height:20px;line-height:20px;font-size:15.75px;color:#333;font-weight:350;">MA7HFXEX-6</div>
<div class="t " style="left:37.7px;top:507.3px;height:20px;line-height:20px;font-size:15.75px;color:#333;font-weight:350;">营业期限</div>
<div class="t " style="left:217.7px;top:507.3px;height:20px;line-height:20px;font-size:15.75px;color:#333;font-weight:350;">2022-02-18 至 无固定期限</div>
<div class="t " style="left:512.0px;top:507.3px;height:20px;line-height:20px;font-size:15.75px;color:#333;font-weight:350;">纳税人资质</div>
<div class="t " style="left:692.5px;top:507.3px;height:20px;line-height:20px;font-size:15.75px;color:#333;font-weight:350;">增值税一般纳税人</div>
<div class="t " style="left:989.2px;top:507.3px;height:20px;line-height:20px;font-size:15.75px;color:#333;font-weight:350;">核准日期</div>
<div class="t " style="left:1169.7px;top:506.5px;height:20px;line-height:20px;font-size:15.75px;color:#333;font-weight:350;">2022-02-18</div>
<div class="t " style="left:37.7px;top:549.9px;height:20px;line-height:20px;font-size:15.75px;color:#333;font-weight:350;">企业类型</div>
<div class="t " style="left:217.7px;top:549.9px;height:20px;line-height:20px;font-size:15.75px;color:#333;font-weight:350;">其他有限责任公司</div>
<div class="t " style="left:512.0px;top:549.9px;height:20px;line-height:20px;font-size:15.75px;color:#333;font-weight:350;">行业</div>
<div class="t " style="left:692.5px;top:549.9px;height:20px;line-height:20px;font-size:15.75px;color:#333;font-weight:350;">批发业</div>
<div class="t " style="left:989.2px;top:549.9px;height:20px;line-height:20px;font-size:15.75px;color:#333;font-weight:350;">人员规模</div>
<div class="t " style="left:1169.7px;top:549.9px;height:20px;line-height:20px;font-size:15.75px;color:#333;font-weight:350;">0人</div>
<div class="t " style="left:37.7px;top:595.4px;height:20px;line-height:20px;font-size:15.75px;color:#333;font-weight:350;">参保人数</div>
<div class="t " style="left:217.7px;top:594.6px;height:20px;line-height:20px;font-size:15.75px;color:#333;font-weight:350;">0</div>
<div class="abs" style="left:231px;top:593px;width:83px;height:25px;border-radius:3px;background:#e4f0fc"></div>
<div class="t " style="left:237.7px;top:595.3px;height:19.9px;line-height:19.9px;font-size:15.9px;color:#1a7fe6;font-weight:350;transform-origin:0 50%;transform:scaleX(0.9);">2024</div>
<div class="t " style="left:269.4px;top:596.1px;height:17.9px;line-height:17.9px;font-size:13.9px;color:#1a7fe6;font-weight:350;letter-spacing:-0.3px;">年报</div>
<svg class="abs" style="left:300.8px;top:601.2px;width:5px;height:7.2px" viewBox="0 0 5 9"><path d="M0 0L5 4.5L0 9Z" fill="#3f93ea"/></svg>
<div class="abs" style="left:319px;top:592px;width:24px;height:25px;border:1px solid #dfe3ec;border-radius:2.5px;background:#fff"></div>
<svg class="abs" style="left:323.9px;top:596.6px;width:14px;height:14px" viewBox="0 0 14 14"><g fill="none" stroke="#1f7ade" stroke-width="1.3"><path d="M0.6 13H13.4" stroke="#5a9ae4" stroke-width="1.9"/><path d="M2.6 11.5V7M5.6 11.5V5.6M8.6 11.5V7M11.6 11.5V5"/><path d="M1.6 5.2L5.4 2.2L8 4.2L12 1"/><path d="M9.6 0.8H12.4V3.4"/></g></svg>
<div class="t " style="left:512.0px;top:595.4px;height:20px;line-height:20px;font-size:15.75px;color:#333;font-weight:350;">英文名称</div>
<div class="t " style="left:692.5px;top:594.6px;height:20px;line-height:20px;font-size:15.75px;color:#333;font-weight:350;">Dongguan Yingyue Cultural Service Co., Ltd.</div>
<div class="t " style="left:1004.6px;top:596.0px;height:20px;line-height:20px;font-size:15.75px;color:#a0a4ab;font-weight:350;">（自动翻译）</div>
<div class="t " style="left:37.7px;top:639.5px;height:20px;line-height:20px;font-size:15.75px;color:#333;font-weight:350;">登记机关</div>
<div class="t " style="left:217.7px;top:639.5px;height:20px;line-height:20px;font-size:15.75px;color:#333;font-weight:350;">东莞市市场监督管理局</div>
<div class="t " style="left:512.0px;top:639.5px;height:20px;line-height:20px;font-size:15.75px;color:#333;font-weight:350;">注册地址</div><svg class="help" style="left:581.6px;top:641.0px;width:14.4px;height:14.4px" viewBox="0 0 14 14"><circle cx="7" cy="7" r="6.2" fill="none" stroke="#a9c5e4" stroke-width="1.5"/><text x="7" y="10.7" text-anchor="middle" font-family="Liberation Sans, sans-serif" font-size="10.8" fill="#a9c5e4" stroke="#a9c5e4" stroke-width="0.45">?</text></svg>
<div class="t " style="left:692.5px;top:639.5px;height:20px;line-height:20px;font-size:15.75px;color:#333;font-weight:350;">广东省东莞市南城街道三元路4号保利都汇大厦1栋3单元1728房</div>
<div class="t " style="left:1141.3px;top:639.2px;height:20px;line-height:20px;font-size:15.75px;color:#1a7fe6;font-weight:350;">附近公司</div>
<div class="t " style="left:37.7px;top:709.2px;height:20px;line-height:20px;font-size:15.75px;color:#333;font-weight:350;">经营范围</div><svg class="help" style="left:107.3px;top:710.7px;width:14.4px;height:14.4px" viewBox="0 0 14 14"><circle cx="7" cy="7" r="6.2" fill="none" stroke="#a9c5e4" stroke-width="1.5"/><text x="7" y="10.7" text-anchor="middle" font-family="Liberation Sans, sans-serif" font-size="10.8" fill="#a9c5e4" stroke="#a9c5e4" stroke-width="0.45">?</text></svg>
<div class="t " style="left:218px;top:683.5px;height:20px;line-height:20px;font-size:15.75px;color:#333;font-weight:350;">许可项目：出版物批发；出版物零售。（依法须经批准的项目，经相关部门批准后方可开展经营活动，具体经营项目以相关部门批准文件或许可证件为准）一般项目：组</div>
<div class="t " style="left:218px;top:708.5px;height:20px;line-height:20px;font-size:15.75px;color:#333;font-weight:350;">织文化艺术交流活动；会议及展览服务；商务代理代办服务；品牌管理；互联网销售（除销售需要许可的商品）；日用品销售；工艺美术品及收藏品零售（象牙及其制品</div>
<div class="t " style="left:218px;top:733.5px;height:20px;line-height:20px;font-size:15.75px;color:#333;font-weight:350;">除外）。（除依法须经批准的项目外，凭营业执照依法自主开展经营活动）</div>
</body></html>
